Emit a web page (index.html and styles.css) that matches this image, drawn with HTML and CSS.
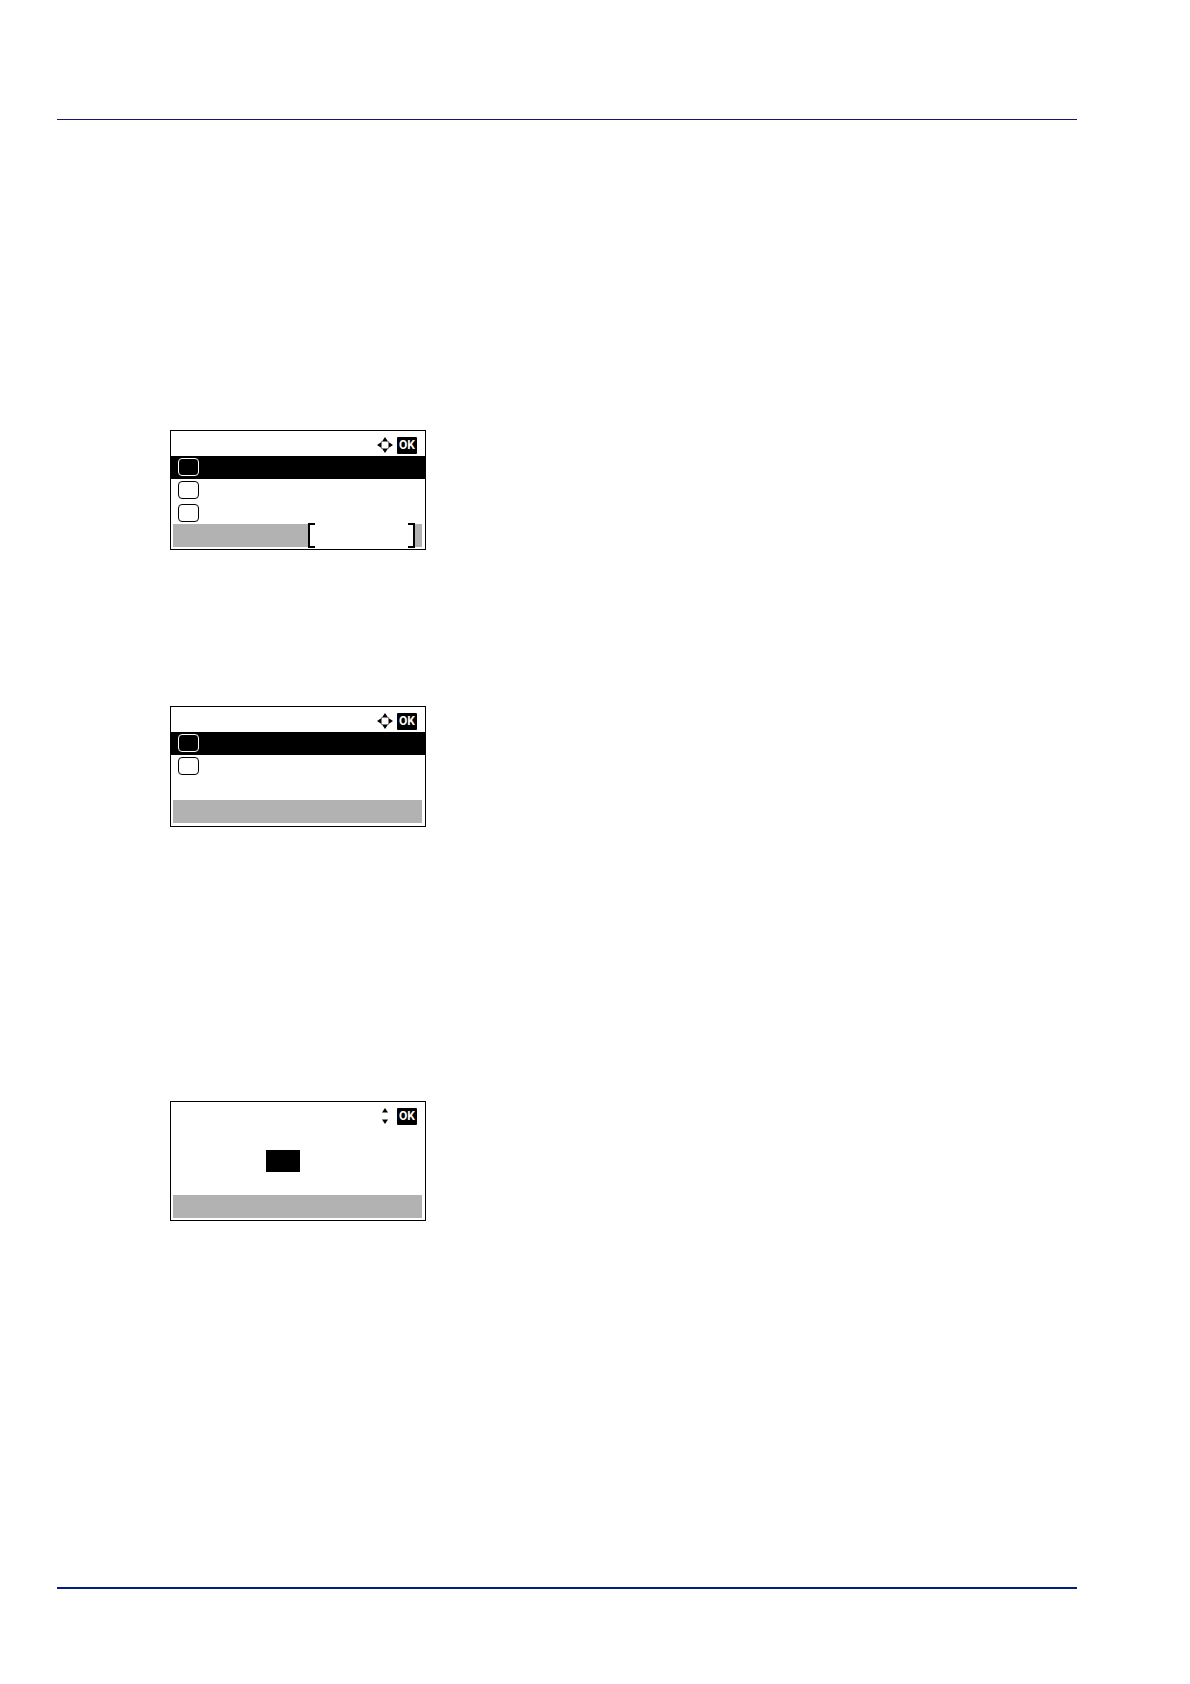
FILE: index.html
```html
<!DOCTYPE html>
<html lang="en">
  <head>
    <meta charset="UTF-8" />
    <meta name="viewport" content="width=device-width, initial-scale=1.0" />
    <title>Display messages</title>

    <link rel="stylesheet" href="styles.css">
  </head>
  <body>
    <header class="page-header"></header>

    <main class="page-content">
      <section class="screen screen-list">
        <div class="screen-title">
          <svg class="arrows" viewBox="0 0 16 16" aria-hidden="true">
            <path d="M8 0L11 4.500H5zM8 16L11 11.500H5zM0 8L4.500 5V11zM16 8L11.500 5V11z" />
            <path class="arrows-frame" d="M4.500 6V4.500H6M10 4.500H11.500V6M4.500 10V11.500H6M10 11.500H11.500V10" />
          </svg>
          <button class="ok" type="button">OK</button>
        </div>
        <ul class="rows">
          <li class="row selected"><span class="number"></span></li>
          <li class="row"><span class="number"></span></li>
          <li class="row"><span class="number"></span></li>
        </ul>
        <div class="softkeys">
          <div class="softkey"></div>
        </div>
      </section>

      <section class="screen screen-menu">
        <div class="screen-title">
          <svg class="arrows" viewBox="0 0 16 16" aria-hidden="true">
            <path d="M8 0L11 4.500H5zM8 16L11 11.500H5zM0 8L4.500 5V11zM16 8L11.500 5V11z" />
            <path class="arrows-frame" d="M4.500 6V4.500H6M10 4.500H11.500V6M4.500 10V11.500H6M10 11.500H11.500V10" />
          </svg>
          <button class="ok" type="button">OK</button>
        </div>
        <ul class="rows">
          <li class="row selected"><span class="number"></span></li>
          <li class="row"><span class="number"></span></li>
        </ul>
        <div class="softkeys"></div>
      </section>

      <section class="screen screen-entry">
        <div class="screen-title">
          <svg class="arrows" viewBox="0 0 16 16" aria-hidden="true">
            <path d="M8 0L11 4.500H5zM8 16L11 11.500H5z" />
          </svg>
          <button class="ok" type="button">OK</button>
        </div>
        <div class="entry">
          <span class="entry-value"></span>
        </div>
        <div class="softkeys"></div>
      </section>
    </main>

    <footer class="page-footer"></footer>
  </body>
</html>
```

FILE: styles.css
```css
* {
  box-sizing: border-box;
}

body {
  display: flex;
  flex-direction: column;
  min-height: 100vh;
  margin: 0;
  padding: 0 113px 0 57px;
  background-color: white;
  font-family: Roboto, "Liberation Sans", sans-serif;
}

.page-header {
  height: 120px;
  border-bottom: 1px solid #17176b;
}

.page-content {
  flex: 1;
  padding: 310px 0 60px 113px;
}

.page-footer {
  height: 97px;
  border-top: 2px solid #001f80;
}

.screen {
  width: 256px;
  padding-bottom: 2px;
  border: 1px solid black;
}

.screen-list {
  margin-bottom: 156px;
}

.screen-menu {
  margin-bottom: 274px;
  padding-bottom: 3px;
}

.screen-title {
  display: flex;
  justify-content: flex-end;
  align-items: flex-start;
  gap: 4px;
  height: 25px;
  padding: 6px 8px 0 0;
}

.arrows {
  width: 16px;
  height: 16px;
}

.arrows-frame {
  fill: none;
  stroke: #777;
}

.ok {
  width: 20px;
  height: 17px;
  padding: 0;
  border: none;
  border-radius: 1px;
  background-color: black;
  color: white;
  font-family: inherit;
  font-size: 12px;
  font-weight: bold;
  line-height: 17px;
}

.rows {
  height: 68px;
  margin: 0;
  padding: 0;
  list-style-type: none;
}

.row {
  height: 23px;
  padding: 2px 0 0 7px;
}

.number {
  display: block;
  width: 21px;
  height: 18px;
  border: 1px solid black;
  border-radius: 4px;
}

.selected {
  background-color: black;
}

.selected .number {
  border-color: white;
}

.softkeys {
  display: flex;
  justify-content: flex-end;
  height: 23px;
  margin: 0 3px 0 2px;
  padding-right: 7px;
  background-color: #b2b2b2;
}

.softkey {
  position: relative;
  width: 107px;
  background-color: white;
}

/* square brackets round the key label */
.softkey::before,
.softkey::after {
  content: "";
  position: absolute;
  top: -1px;
  bottom: -1px;
  width: 5px;
  border: 2px solid black;
}

.softkey::before {
  left: 0;
  border-right: none;
}

.softkey::after {
  right: 0;
  border-left: none;
}

.entry {
  height: 68px;
  padding: 23px 0 0 95px;
}

.entry-value {
  display: block;
  width: 34px;
  height: 22px;
  background-color: black;
}
```
